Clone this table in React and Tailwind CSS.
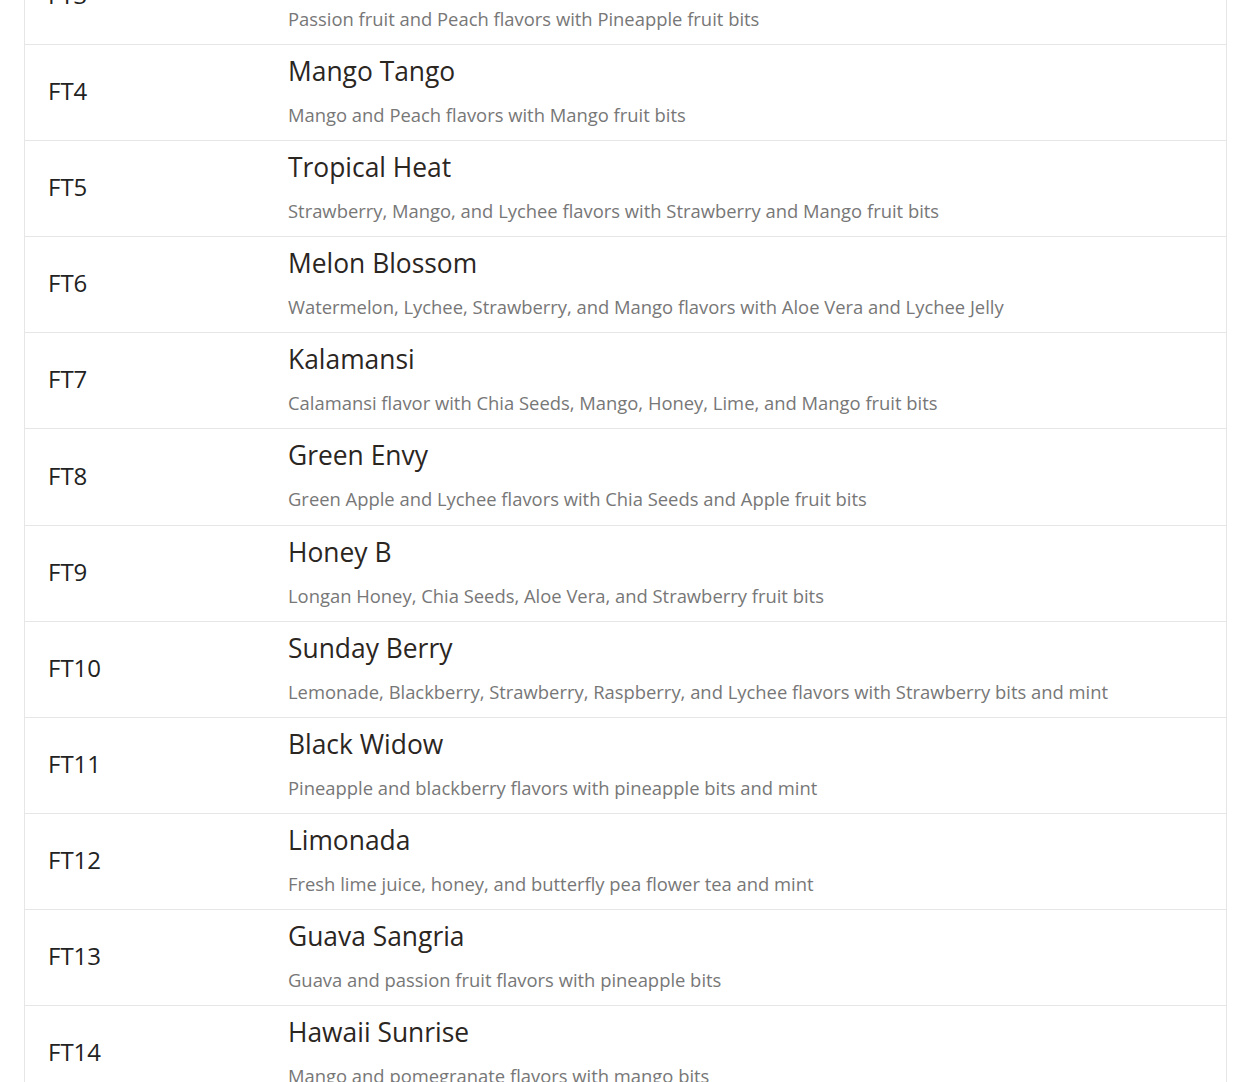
import React from "react";

const drinks = [
  { code: "FT3", name: "Passion Paradise", desc: "Passion fruit and Peach flavors with Pineapple fruit bits" },
  { code: "FT4", name: "Mango Tango", desc: "Mango and Peach flavors with Mango fruit bits" },
  { code: "FT5", name: "Tropical Heat", desc: "Strawberry, Mango, and Lychee flavors with Strawberry and Mango fruit bits" },
  { code: "FT6", name: "Melon Blossom", desc: "Watermelon, Lychee, Strawberry, and Mango flavors with Aloe Vera and Lychee Jelly" },
  { code: "FT7", name: "Kalamansi", desc: "Calamansi flavor with Chia Seeds, Mango, Honey, Lime, and Mango fruit bits" },
  { code: "FT8", name: "Green Envy", desc: "Green Apple and Lychee flavors with Chia Seeds and Apple fruit bits" },
  { code: "FT9", name: "Honey B", desc: "Longan Honey, Chia Seeds, Aloe Vera, and Strawberry fruit bits" },
  { code: "FT10", name: "Sunday Berry", desc: "Lemonade, Blackberry, Strawberry, Raspberry, and Lychee flavors with Strawberry bits and mint" },
  { code: "FT11", name: "Black Widow", desc: "Pineapple and blackberry flavors with pineapple bits and mint" },
  { code: "FT12", name: "Limonada", desc: "Fresh lime juice, honey, and butterfly pea flower tea and mint" },
  { code: "FT13", name: "Guava Sangria", desc: "Guava and passion fruit flavors with pineapple bits" },
  { code: "FT14", name: "Hawaii Sunrise", desc: "Mango and pomegranate flavors with mango bits" },
  { code: "FT15", name: "Lychee Dream", desc: "Lychee and peach flavors with lychee jelly" },
];

export default function App() {
  return (
    <div
      className="h-[1082px] overflow-hidden bg-white pl-6 pr-[23px]"
      style={{ fontFamily: '"Open Sans", sans-serif' }}
    >
      {/* menu table, scrolled so FT3 sits half off the top */}
      <div className="-mt-[51px] border-x border-[#e6e6e6]">
        {drinks.map((d) => (
          <div
            key={d.code}
            className="grid h-[96.1px] grid-cols-[239px_1fr] border-b border-[#e6e6e6]"
          >
            <div className="flex items-center pb-[3px] pl-[23px] text-[24px] text-[#222222]">
              {d.code}
            </div>
            <div className="pl-6 pt-[9px]">
              <div className="text-[26.4px] leading-[34px] text-[#2b261f]">{d.name}</div>
              <div className="mt-[15px] text-[18.4px] leading-[24px] text-[#777777]">{d.desc}</div>
            </div>
          </div>
        ))}
      </div>
    </div>
  );
}
